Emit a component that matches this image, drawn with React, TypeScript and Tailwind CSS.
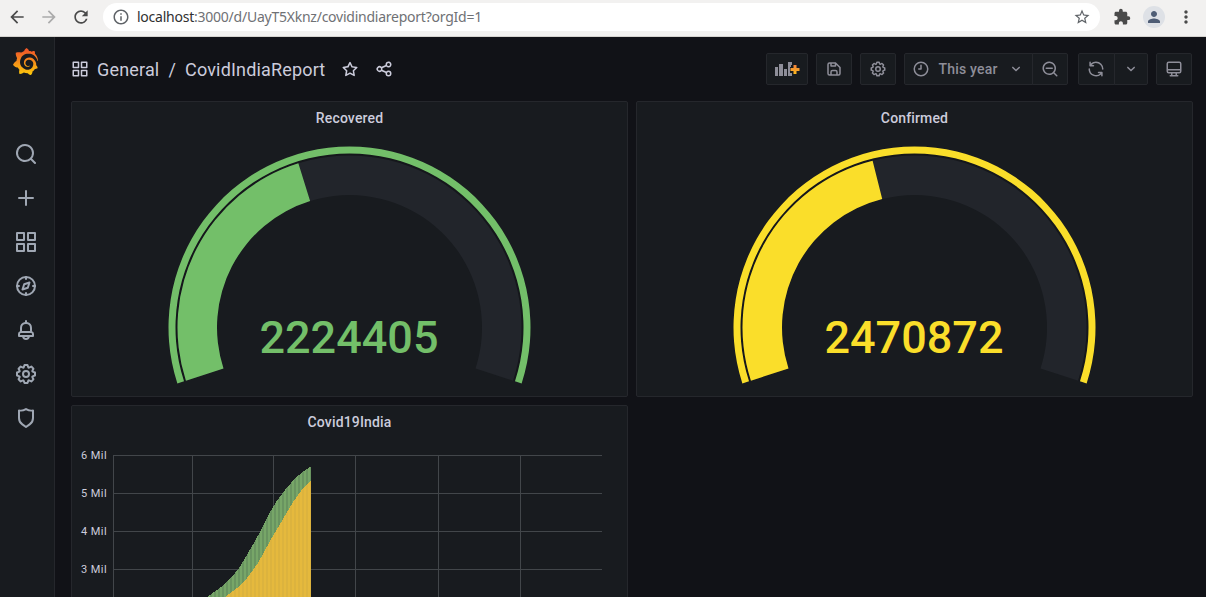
import React from "react";
import { MdArrowBack, MdArrowForward, MdRefresh, MdInfoOutline, MdStarBorder, MdExtension, MdPerson, MdMoreVert } from "react-icons/md";
import { SiGrafana } from "react-icons/si";

const paths = {
  apps: "M10,13H3a1,1,0,0,0-1,1v7a1,1,0,0,0,1,1h7a1,1,0,0,0,1-1V14A1,1,0,0,0,10,13ZM9,20H4V15H9ZM21,2H14a1,1,0,0,0-1,1v7a1,1,0,0,0,1,1h7a1,1,0,0,0,1-1V3A1,1,0,0,0,21,2ZM20,9H15V4h5Zm1,4H14a1,1,0,0,0-1,1v7a1,1,0,0,0,1,1h7a1,1,0,0,0,1-1V14A1,1,0,0,0,21,13Zm-1,7H15V15h5ZM10,2H3A1,1,0,0,0,2,3v7a1,1,0,0,0,1,1h7a1,1,0,0,0,1-1V3A1,1,0,0,0,10,2ZM9,9H4V4H9Z",
  search: "M21.71,20.29,18,16.61A9,9,0,1,0,16.61,18l3.68,3.68a1,1,0,0,0,1.42,0A1,1,0,0,0,21.71,20.29ZM11,18a7,7,0,1,1,7-7A7,7,0,0,1,11,18Z",
  zoomOut: "M21.71,20.29,18,16.61A9,9,0,1,0,16.61,18l3.68,3.68a1,1,0,0,0,1.42,0A1,1,0,0,0,21.71,20.29ZM11,18a7,7,0,1,1,7-7A7,7,0,0,1,11,18ZM7,10H15a1,1,0,0,1,0,2H7a1,1,0,0,1,0-2Z",
  plus: "M19,11H13V5a1,1,0,0,0-2,0v6H5a1,1,0,0,0,0,2h6v6a1,1,0,0,0,2,0V13h6a1,1,0,0,0,0-2Z",
  bell: "M18,13.18V10a6,6,0,0,0-5-5.91V3a1,1,0,0,0-2,0V4.09A6,6,0,0,0,6,10v3.18A3,3,0,0,0,4,16v2a1,1,0,0,0,1,1H8.14a4,4,0,0,0,7.72,0H19a1,1,0,0,0,1-1V16A3,3,0,0,0,18,13.18ZM8,10a4,4,0,0,1,8,0v3H8Zm4,10a2,2,0,0,1-1.72-1h3.44A2,2,0,0,1,12,20Zm6-3H6V16a1,1,0,0,1,1-1H17a1,1,0,0,1,1,1Z",
  cog: "M21.32,9.55l-1.89-.63.89-1.78A1,1,0,0,0,20.13,6L18,3.87a1,1,0,0,0-1.15-.19l-1.78.89-.63-1.89A1,1,0,0,0,13.5,2h-3a1,1,0,0,0-.95.68L8.92,4.57,7.14,3.68A1,1,0,0,0,6,3.87L3.87,6a1,1,0,0,0-.19,1.15l.89,1.78-1.89.63A1,1,0,0,0,2,10.5v3a1,1,0,0,0,.68.95l1.89.63-.89,1.78A1,1,0,0,0,3.87,18L6,20.13a1,1,0,0,0,1.15.19l1.78-.89.63,1.89a1,1,0,0,0,.95.68h3a1,1,0,0,0,.95-.68l.63-1.89,1.78.89A1,1,0,0,0,18,20.13L20.13,18a1,1,0,0,0,.19-1.15l-.89-1.78,1.89-.63A1,1,0,0,0,22,13.5v-3A1,1,0,0,0,21.32,9.55ZM20,12.78l-1.2.4A2,2,0,0,0,17.64,16l.57,1.14-1.1,1.1L16,17.64a2,2,0,0,0-2.79,1.16l-.4,1.2H11.22l-.4-1.2A2,2,0,0,0,8,17.64l-1.14.57-1.1-1.1L6.36,16A2,2,0,0,0,5.2,13.18L4,12.78V11.22l1.2-.4A2,2,0,0,0,6.36,8L5.79,6.89l1.1-1.1L8,6.36A2,2,0,0,0,10.82,5.2l.4-1.2h1.56l.4,1.2A2,2,0,0,0,16,6.36l1.14-.57,1.1,1.1L17.64,8a2,2,0,0,0,1.16,2.79l1.2.4ZM12,8a4,4,0,1,0,4,4A4,4,0,0,0,12,8Zm0,6a2,2,0,1,1,2-2A2,2,0,0,1,12,14Z",
  shield: "M19.63,3.65a1,1,0,0,0-.84-.2,8,8,0,0,1-6.22-1.27,1,1,0,0,0-1.14,0A8,8,0,0,1,5.21,3.45a1,1,0,0,0-.84.2A1,1,0,0,0,4,4.43v7.45a9,9,0,0,0,3.77,7.33l3.65,2.6a1,1,0,0,0,1.16,0l3.65-2.6A9,9,0,0,0,20,11.88V4.43A1,1,0,0,0,19.63,3.65ZM18,11.88a7,7,0,0,1-2.93,5.7L12,19.77,8.93,17.58A7,7,0,0,1,6,11.88V5.58a10,10,0,0,0,6-1.39,10,10,0,0,0,6,1.39Z",
  star: "M22,9.67A1,1,0,0,0,21.14,9l-5.69-.83L12.9,3a1,1,0,0,0-1.8,0L8.55,8.16,2.86,9a1,1,0,0,0-.81.68,1,1,0,0,0,.25,1l4.13,4-1,5.68A1,1,0,0,0,6.9,21.44L12,18.77l5.1,2.67a.93.93,0,0,0,.46.12,1,1,0,0,0,.59-.19,1,1,0,0,0,.4-1l-1-5.68,4.13-4A1,1,0,0,0,22,9.67Zm-6.15,4a1,1,0,0,0-.29.88l.72,4.2-3.76-2a1.06,1.06,0,0,0-.94,0l-3.76,2,.72-4.2a1,1,0,0,0-.29-.88l-3-3,4.21-.61a1,1,0,0,0,.76-.55L12,5.7l1.88,3.82a1,1,0,0,0,.76.55l4.21.61Z",
  share: "M18,14a4,4,0,0,0-3.08,1.48l-5.1-2.35a3.64,3.64,0,0,0,0-2.26l5.1-2.35A4,4,0,1,0,14,6a4.17,4.17,0,0,0,.07.71L8.79,9.14a4,4,0,1,0,0,5.72l5.28,2.43A4.17,4.17,0,0,0,14,18a4,4,0,1,0,4-4ZM18,4a2,2,0,1,1-2,2A2,2,0,0,1,18,4ZM6,14a2,2,0,1,1,2-2A2,2,0,0,1,6,14Zm12,6a2,2,0,1,1,2-2A2,2,0,0,1,18,20Z",
  save: "M20.71,9.29l-6-6a1,1,0,0,0-.32-.21A1.09,1.09,0,0,0,14,3H6A3,3,0,0,0,3,6V18a3,3,0,0,0,3,3H18a3,3,0,0,0,3-3V10A1,1,0,0,0,20.71,9.29ZM9,5h4V7H9Zm6,14H9V16a1,1,0,0,1,1-1h4a1,1,0,0,1,1,1Zm4-1a1,1,0,0,1-1,1H17V16a3,3,0,0,0-3-3H10a3,3,0,0,0-3,3v3H6a1,1,0,0,1-1-1V6A1,1,0,0,1,6,5H7V8A1,1,0,0,0,8,9h6a1,1,0,0,0,1-1V6.41l4,4Z",
  angle: "M17,9.17a1,1,0,0,0-1.41,0L12,12.71,8.46,9.17a1,1,0,0,0-1.41,0,1,1,0,0,0,0,1.42l4.24,4.24a1,1,0,0,0,1.42,0L17,10.59A1,1,0,0,0,17,9.17Z",
  sync: "M19.91,15.51H15.38a1,1,0,0,0,0,2h2.4A8,8,0,0,1,4,12a1,1,0,0,0-2,0,10,10,0,0,0,16.88,7.23V21a1,1,0,0,0,2,0V16.5A1,1,0,0,0,19.91,15.51ZM12,2A10,10,0,0,0,5.12,4.77V3a1,1,0,0,0-2,0V7.5a1,1,0,0,0,1,1h4.5a1,1,0,0,0,0-2H6.22A8,8,0,0,1,20,12a1,1,0,0,0,2,0A10,10,0,0,0,12,2Z",
};

function Icon({ name, className }: { name: keyof typeof paths; className: string }) {
  return (
    <svg viewBox="0 0 24 24" fill="currentColor" className={`shrink-0 ${className}`}>
      <path d={paths[name]} />
    </svg>
  );
}

function LineIcon({ children, className }: { children: React.ReactNode; className: string }) {
  return (
    <svg viewBox="0 0 24 24" fill="none" stroke="currentColor" strokeWidth={2} strokeLinecap="round" strokeLinejoin="round" className={`shrink-0 ${className}`}>
      {children}
    </svg>
  );
}

function BrowserBar() {
  return (
    <div className="flex h-[37px] shrink-0 items-center border-b border-[#d5d3cf] bg-[#f2f1f0] pb-[2px] text-[#4a4a4a]">
      <MdArrowBack className="ml-[7px] size-5" />
      <MdArrowForward className="ml-3 size-5 text-[#ababab]" />
      <MdRefresh className="ml-3 size-5" />
      <div className="ml-3 flex h-7 w-[997px] items-center rounded-full bg-white pl-[9px] pr-[9px]">
        <MdInfoOutline className="size-[18px] text-[#5f6368]" />
        <span className="ml-[7px] w-[346px] whitespace-nowrap pb-[2px] font-['Noto_Sans',sans-serif] text-[14px] tracking-[-0.24px] text-[#6f7175]">
          <span className="text-[#303030]">localhost</span>:3000/d/UayT5Xknz/covidindiareport?orgId=1
        </span>
        <MdStarBorder className="ml-auto size-[18px] text-[#5f6368]" />
      </div>
      <MdExtension className="ml-[13px] size-[18px]" />
      <div className="ml-3 flex size-[22px] items-center justify-center rounded-full bg-[#dee1e6]">
        <MdPerson className="size-[18px] text-[#4f5d75]" />
      </div>
      <MdMoreVert className="ml-[11px] size-5" />
    </div>
  );
}

function Sidebar() {
  return (
    <nav className="flex w-[55px] shrink-0 flex-col items-center border-r border-[#25272c] bg-[#181b1f] pr-[2px] text-[#9fa7b3]">
      <svg className="absolute size-0">
        <linearGradient id="brand" x1="0" y1="0" x2="0" y2="1">
          <stop offset="0.1" stopColor="#f05a28" />
          <stop offset="1" stopColor="#fbca0a" />
        </linearGradient>
      </svg>
      <SiGrafana className="mr-[2px] mt-[11px] h-[27px] w-[27px] [&_path]:fill-[url(#brand)]" />
      <div className="mt-[67px] flex flex-col gap-5">
        <Icon name="search" className="size-6" />
        <Icon name="plus" className="size-6" />
        <Icon name="apps" className="size-6" />
        <LineIcon className="size-6">
          <circle cx="12" cy="12" r="9" />
          <path d="M12 3v2M12 19v2M3 12h2M19 12h2M15.5 8.5l-1.7 5.3-5.3 1.7 1.7-5.3z" />
        </LineIcon>
        <Icon name="bell" className="size-6" />
        <Icon name="cog" className="size-6" />
        <Icon name="shield" className="size-6" />
      </div>
    </nav>
  );
}

const button = "flex h-8 items-center justify-center border border-[#25272c] bg-[#181b1f] text-[#8e8e99]";

function Toolbar() {
  return (
    <header className="flex h-16 shrink-0 items-center pl-4 pr-[14px] text-[#ccccdc]">
      <Icon name="apps" className="size-[18px]" />
      <h1 className="ml-2 whitespace-nowrap text-[18px] tracking-[0.17px]">
        General<span className="mx-[9px]">/</span>CovidIndiaReport
      </h1>
      <Icon name="star" className="ml-4 size-[18px]" />
      <Icon name="share" className="ml-4 size-[18px]" />
      <div className="ml-auto flex">
        <button className={`${button} w-[42px] rounded-xs`}>
          <svg viewBox="0 0 25 15" className="h-[15px] w-[25px]">
            <path d="M0 5h3v9H0zM4 2h4v12H4zM9 7h3v7H9zM13 0h4v14h-4z" fill="#8e8e99" />
            <path d="M15 3h7v3h3v5h-3v3h-5v-3h-2z" fill="#181b1f" />
            <path d="M13 0h3v5h-1v6h1v3h-3z" fill="#8e8e99" />
            <path d="M18.500 3h3v3h3v3h-3v3h-3V9h-3V6h3z" fill="url(#brandPlus)" />
            <linearGradient id="brandPlus" x1="0" y1="0" x2="0" y2="1">
              <stop stopColor="#f5813c" />
              <stop offset="1" stopColor="#fbb91d" />
            </linearGradient>
          </svg>
        </button>
        <button className={`${button} ml-2 w-9 rounded-xs`}><Icon name="save" className="size-[18px]" /></button>
        <button className={`${button} ml-2 w-9 rounded-xs`}><Icon name="cog" className="size-[18px]" /></button>
        <button className={`${button} ml-2 w-[129px] rounded-l-xs`}>
          <LineIcon className="size-[18px]">
            <circle cx="12" cy="12" r="9" />
            <path d="M12 7v5H9" />
          </LineIcon>
          <span className="ml-2 text-[14px] font-medium tracking-[0.2px]">This year</span>
          <Icon name="angle" className="ml-[9px] size-[18px]" />
        </button>
        <button className={`${button} -ml-px w-9 rounded-r-xs`}><Icon name="zoomOut" className="size-[18px]" /></button>
        <button className={`${button} ml-[10px] w-[37px] rounded-l-xs pr-px`}><Icon name="sync" className="size-[18px]" /></button>
        <button className={`${button} -ml-px w-[34px] rounded-r-xs`}><Icon name="angle" className="size-[18px]" /></button>
        <button className={`${button} ml-2 w-9 rounded-xs`}>
          <LineIcon className="size-[18px]">
            <path d="M5 3h14a2 2 0 0 1 2 2v10a2 2 0 0 1-2 2H5a2 2 0 0 1-2-2V5a2 2 0 0 1 2-2zM3 13h18M9 17v4M15 17v4M7 21h10" />
          </LineIcon>
        </button>
      </div>
    </header>
  );
}

function Panel({ title, children, className = "" }: { title: string; children: React.ReactNode; className?: string }) {
  return (
    <section className={`flex w-[557px] shrink-0 flex-col overflow-hidden rounded-xs border border-[#25272c] bg-[#181b1f] ${className}`}>
      <h2 className="h-8 shrink-0 text-center text-[14px] font-medium leading-8 tracking-[0.15px] text-[#ccccdc]">{title}</h2>
      {children}
    </section>
  );
}

// Angles are in degrees clockwise from the left end of the horizontal axis.
function arc(outer: number, inner: number, from: number, to: number) {
  const at = (r: number, deg: number) => {
    const a = (deg * Math.PI) / 180;
    return `${(277.5 - r * Math.cos(a)).toFixed(2)} ${(193.5 - r * Math.sin(a)).toFixed(2)}`;
  };
  const large = to - from > 180 ? 1 : 0;
  return `M${at(outer, from)}A${outer} ${outer} 0 ${large} 1 ${at(outer, to)}L${at(inner, to)}A${inner} ${inner} 0 ${large} 0 ${at(inner, from)}Z`;
}

function Gauge({ value, color, end }: { value: string; color: string; end: number }) {
  return (
    <svg viewBox="0 0 555 262" className="h-[262px] w-[555px]">
      <path d={arc(173, 132.500, -18, 198)} fill="#22252b" />
      <path d={arc(174, 172, -18, 198)} fill="#15171b" />
      <path d={arc(172, 132.500, -18, end)} fill={color} />
      <path d={arc(181, 174, -18, 198)} fill={color} />
      <text x="277" y="219" textAnchor="middle" fill={color} fontSize="45" className="font-medium">{value}</text>
    </svg>
  );
}

const topLine = [[204, 599], [207, 597], [223, 585.7], [233, 575.7], [240, 566.7], [251.7, 546.7], [260, 532], [268, 515.5], [277, 500.5], [287, 487.2], [297, 476.7], [304, 471], [311, 466.3]];
const lowLine = [[222, 599], [225, 597], [237, 588], [247, 578], [258, 563], [270, 541], [283, 519], [293, 502], [303, 488], [311, 481]];

function heightAt(points: number[][], x: number) {
  for (let i = 1; i < points.length; i++) {
    const [x0, y0] = points[i - 1];
    const [x1, y1] = points[i];
    if (x >= x0 && x <= x1) return y0 + ((y1 - y0) * (x - x0)) / (x1 - x0);
  }
  return 600;
}

function BarChart() {
  const columns = Array.from({ length: 107 }, (_, i) => 204 + i);
  return (
    <svg viewBox="72 438 555 160" className="h-[160px] w-[555px] shrink-0">
      {[455, 493, 531, 569].map((y, i) => (
        <g key={y}>
          <rect x="113" y={y} width="489" height="1" fill="#42464a" />
          <text x="107" y={y + 4} textAnchor="end" fontSize="11" letterSpacing="0.4" fill="#ccccdc">{6 - i} Mil</text>
        </g>
      ))}
      {[113, 192, 273, 355, 438, 520].map((x) => (
        <rect key={x} x={x} y="455" width="1" height="143" fill="#42464a" />
      ))}
      {columns.map((x) => {
        const top = Math.round(heightAt(topLine, x + 0.5));
        const low = Math.round(heightAt(lowLine, x + 0.5));
        return (
          <g key={x}>
            <rect x={x} y={top} width="1" height={600 - top} fill={x % 4 < 2 ? "#77a668" : "#699460"} />
            <rect x={x} y={low} width="1" height={600 - low} fill={x % 4 < 2 ? "#e5b93d" : "#dcb33e"} />
          </g>
        );
      })}
    </svg>
  );
}

export default function App() {
  return (
    <div className="flex h-[597px] w-[1206px] flex-col overflow-hidden bg-[#111217] font-[Roboto,sans-serif]">
      <BrowserBar />
      <div className="flex min-h-0 flex-1">
        <Sidebar />
        <main className="flex min-w-0 flex-1 flex-col">
          <Toolbar />
          <div className="grid grid-cols-[557px_557px] gap-2 pl-4">
            <Panel title="Recovered" className="h-[296px]"><Gauge value="2224405" color="#73bf69" end={72.7} /></Panel>
            <Panel title="Confirmed" className="h-[296px]"><Gauge value="2470872" color="#fade2a" end={75.9} /></Panel>
            <Panel title="Covid19India" className="h-[296px]"><BarChart /></Panel>
          </div>
        </main>
      </div>
    </div>
  );
}
